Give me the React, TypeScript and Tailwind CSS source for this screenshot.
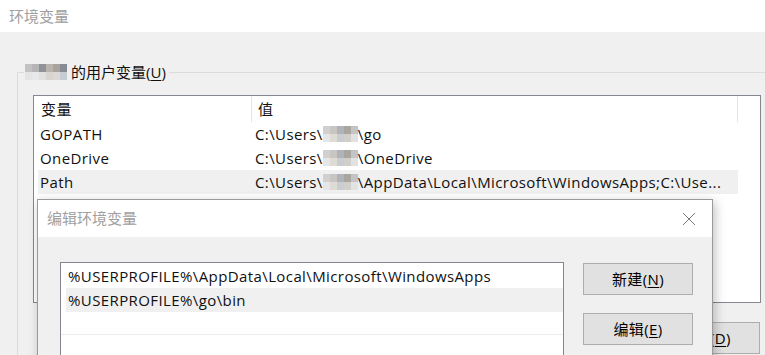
import React from "react";

const font = { fontFamily: '"Open Sans", "Noto Sans CJK SC", sans-serif' };

const Blur = ({ top, bottom }: { top: string[]; bottom: string[] }) => (
  <span className="inline-flex flex-col align-middle">
    <span className="flex">
      {top.map((c, i) => (
        <span key={i} className="w-[7px] h-[8px]" style={{ background: c }} />
      ))}
    </span>
    <span className="flex">
      {bottom.map((c, i) => (
        <span key={i} className="w-[7px] h-[8px]" style={{ background: c }} />
      ))}
    </span>
  </span>
);

const Btn = ({ label, k, className = "" }: { label: string; k: string; className?: string }) => (
  <button
    className={
      "w-[110px] h-[32px] border border-[#adadad] bg-[#e1e1e1] text-[15px] text-black flex items-center justify-center " +
      className
    }
  >
    {label}(<span className="underline underline-offset-2">{k}</span>)
  </button>
);

const rows = [
  { name: "GOPATH", pre: "C:\\Users\\", post: "\\go" },
  { name: "OneDrive", pre: "C:\\Users\\", post: "\\OneDrive" },
  { name: "Path", pre: "C:\\Users\\", post: "\\AppData\\Local\\Microsoft\\WindowsApps;C:\\Use...", sel: true },
];

export default function App() {
  return (
    <div
      className="relative w-[765px] h-[355px] overflow-hidden bg-[#f0f0f0] text-[#111] tracking-[0.4px]"
      style={font}
    >
      <div className="h-8 bg-white flex items-center pl-[9px] text-[15px] text-[#a0a0a0] tracking-normal">环境变量</div>

      <div className="relative ml-[17px] mt-[40px] border-t border-l border-[#dcdcdc] h-[300px]">
        <div className="absolute -top-[12px] left-[6px] flex items-center gap-[4px] pl-[1px] pr-[3px] bg-[#f0f0f0] text-[15px] leading-[22px] tracking-normal">
          <Blur
            top={["#c2c2c2", "#b5b5b5", "#8f9296", "#b9b4ae", "#a8a39c", "#878c94"]}
            bottom={["#e4e4e4", "#e8e8e8", "#e0e0e0", "#d9d4cf", "#dcd8d3", "#c6ccd4"]}
          />
          <span>
            的用户变量(<span className="underline underline-offset-2">U</span>)
          </span>
        </div>

        <div className="ml-[15px] mt-[22px] mr-[4px] h-[208px] border border-[#828790] bg-white text-[15px]">
          <div className="flex h-[26px] items-center">
            <div className="w-[218px] h-full flex items-center pl-[7px] border-r border-[#e5e5e5]">变量</div>
            <div className="w-[486px] h-full flex items-center pl-[6px] border-r border-[#e5e5e5]">值</div>
          </div>
          {rows.map((r) => (
            <div
              key={r.name}
              className={"flex h-[24px] items-center ml-[4px] w-[700px] " + (r.sel ? "bg-[#f0f0f0]" : "")}
            >
              <div className="w-[217px] pl-[2px]">{r.name}</div>
              <div className="flex items-center whitespace-nowrap">
                {r.pre}
                <Blur
                  top={["#d0d0d0", "#c9c5c0", "#b0b3b8", "#aaa59f", "#c4c4c4"]}
                  bottom={["#e6e6e6", "#dedad6", "#c9ccd0", "#d2cec9", "#e2e2e2"]}
                />
                {r.post}
              </div>
            </div>
          ))}
        </div>

        <Btn label="删除" k="D" className="absolute left-[632px] top-[249px]" />
      </div>

      <div className="absolute left-[37px] top-[199px] w-[676px] h-[170px] border border-[#9a9a9a] bg-[#f0f0f0] shadow-[2px_3px_10px_rgba(0,0,0,0.25)]">
        <div className="h-[37px] bg-white flex items-center justify-between pl-[9px] pr-[16px] text-[15px] text-[#a0a0a0] tracking-normal">
          <span>编辑环境变量</span>
          <svg width="14" height="14" viewBox="0 0 14 14">
            <path d="M1 1L13 13M13 1L1 13" stroke="#7a7a7a" strokeWidth="1" fill="none" />
          </svg>
        </div>
        <div className="flex pl-[22px] pt-[25px] gap-[19px]">
          <div className="w-[504px] h-[120px] border border-[#828790] bg-white text-[15px]">
            <div className="h-[24px] flex items-center pl-[7px] mt-[1px]">
              %USERPROFILE%\AppData\Local\Microsoft\WindowsApps
            </div>
            <div className="h-[24px] flex items-center pl-[2px] ml-[5px] bg-[#f0f0f0]">%USERPROFILE%\go\bin</div>
            <div className="h-[23px] border-b border-[#ececec]" />
          </div>
          <div className="flex flex-col gap-[18px] pt-[1px]">
            <Btn label="新建" k="N" />
            <Btn label="编辑" k="E" />
          </div>
        </div>
      </div>
    </div>
  );
}
